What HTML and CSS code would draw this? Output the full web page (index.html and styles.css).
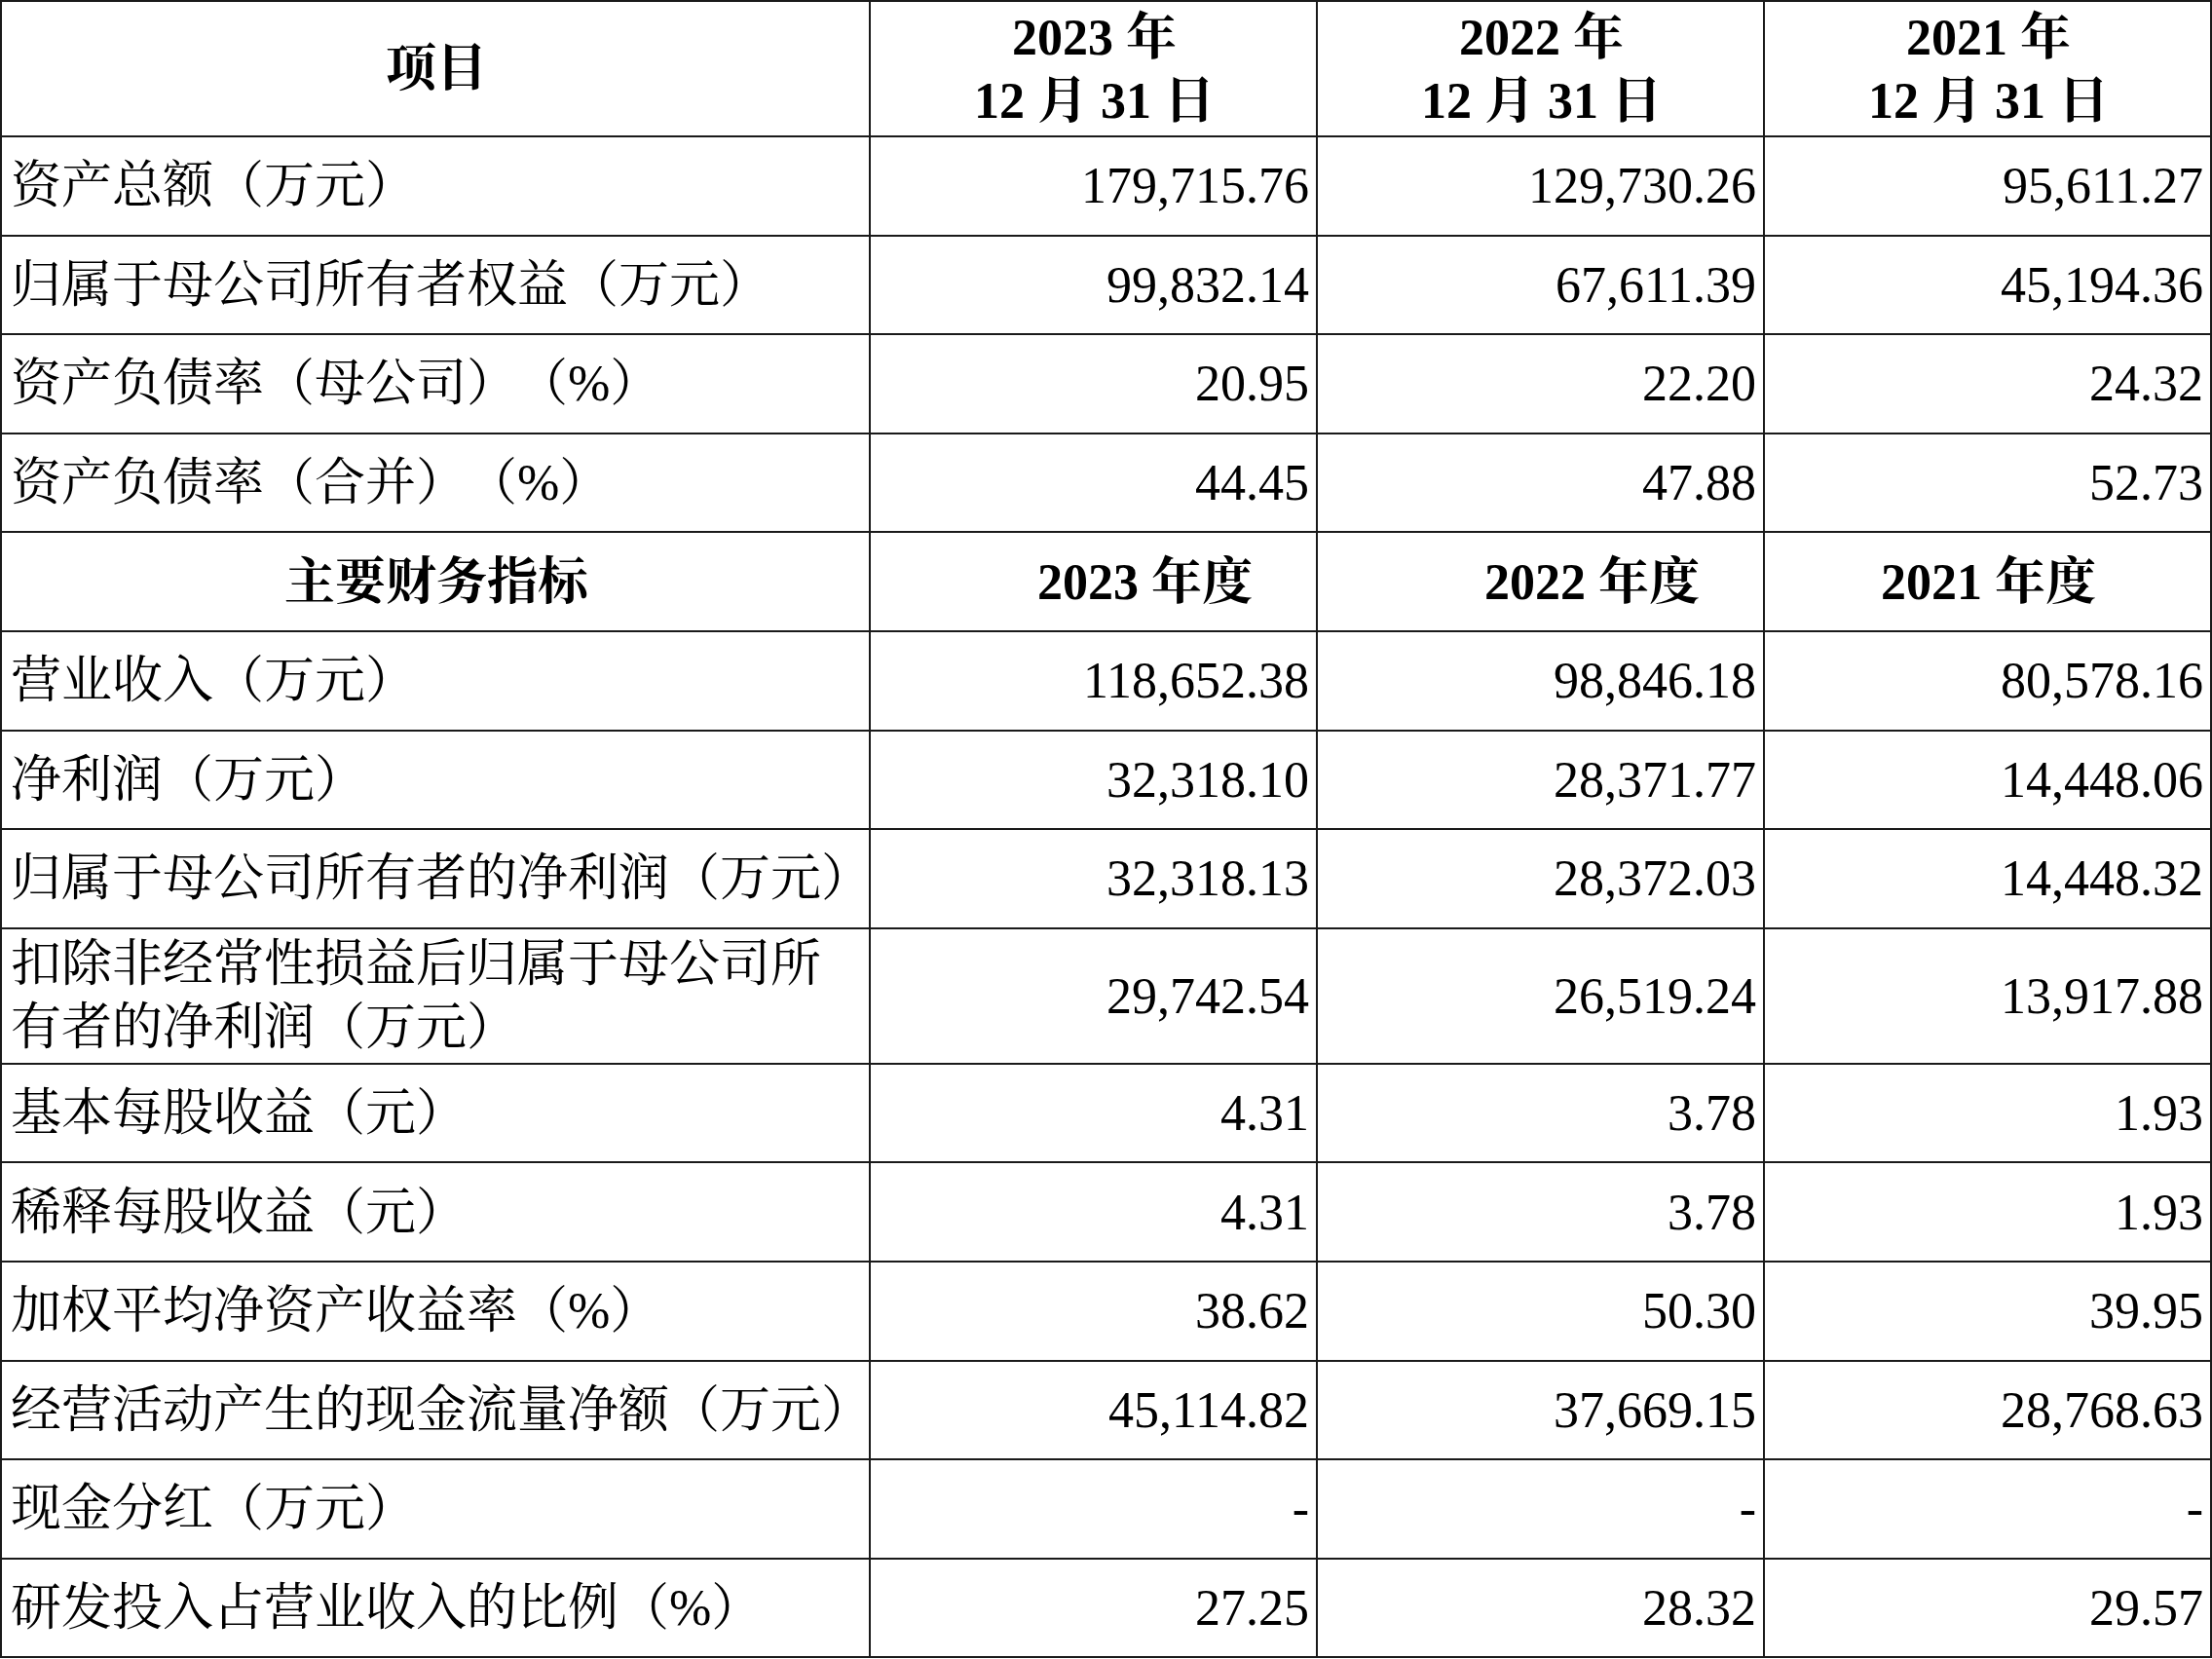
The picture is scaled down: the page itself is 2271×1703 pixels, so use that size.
FILE: index.html
```html
<!DOCTYPE html>
<html lang="zh-CN">
<head>
<meta charset="utf-8">
<title>主要财务指标</title>
<link rel="stylesheet" href="styles.css">
</head>
<body>
<table class="fin">
  <colgroup>
    <col class="c-item">
    <col class="c-val">
    <col class="c-val">
    <col class="c-val">
  </colgroup>
  <tr class="row-tall head">
    <th>项目</th>
    <th>2023 年<br>12 月 31 日</th>
    <th>2022 年<br>12 月 31 日</th>
    <th>2021 年<br>12 月 31 日</th>
  </tr>
  <tr class="row"><td class="label">资产总额（万元）</td><td class="num">179,715.76</td><td class="num">129,730.26</td><td class="num">95,611.27</td></tr>
  <tr class="row"><td class="label">归属于母公司所有者权益（万元）</td><td class="num">99,832.14</td><td class="num">67,611.39</td><td class="num">45,194.36</td></tr>
  <tr class="row"><td class="label">资产负债率（母公司）（%）</td><td class="num">20.95</td><td class="num">22.20</td><td class="num">24.32</td></tr>
  <tr class="row"><td class="label">资产负债率（合并）（%）</td><td class="num">44.45</td><td class="num">47.88</td><td class="num">52.73</td></tr>
  <tr class="row head"><th>主要财务指标</th><th class="shift">2023 年度</th><th class="shift">2022 年度</th><th>2021 年度</th></tr>
  <tr class="row"><td class="label">营业收入（万元）</td><td class="num">118,652.38</td><td class="num">98,846.18</td><td class="num">80,578.16</td></tr>
  <tr class="row"><td class="label">净利润（万元）</td><td class="num">32,318.10</td><td class="num">28,371.77</td><td class="num">14,448.06</td></tr>
  <tr class="row"><td class="label">归属于母公司所有者的净利润（万元）</td><td class="num">32,318.13</td><td class="num">28,372.03</td><td class="num">14,448.32</td></tr>
  <tr class="row-tall"><td class="label">扣除非经常性损益后归属于母公司所<br>有者的净利润（万元）</td><td class="num">29,742.54</td><td class="num">26,519.24</td><td class="num">13,917.88</td></tr>
  <tr class="row"><td class="label">基本每股收益（元）</td><td class="num">4.31</td><td class="num">3.78</td><td class="num">1.93</td></tr>
  <tr class="row"><td class="label">稀释每股收益（元）</td><td class="num">4.31</td><td class="num">3.78</td><td class="num">1.93</td></tr>
  <tr class="row"><td class="label">加权平均净资产收益率（%）</td><td class="num">38.62</td><td class="num">50.30</td><td class="num">39.95</td></tr>
  <tr class="row"><td class="label">经营活动产生的现金流量净额（万元）</td><td class="num">45,114.82</td><td class="num">37,669.15</td><td class="num">28,768.63</td></tr>
  <tr class="row"><td class="label">现金分红（万元）</td><td class="num">-</td><td class="num">-</td><td class="num">-</td></tr>
  <tr class="row"><td class="label">研发投入占营业收入的比例（%）</td><td class="num">27.25</td><td class="num">28.32</td><td class="num">29.57</td></tr>
</table>
</body>
</html>
```

FILE: styles.css
```css
html, body {
  margin: 0;
  padding: 0;
  background: #ffffff;
}

.fin {
  border-collapse: collapse;
  table-layout: fixed;
  width: 2271px;
  font-family: "Liberation Serif", "Noto Serif CJK SC", "Noto Sans CJK SC", serif;
  font-size: 52px;
  line-height: 65px;
  color: #000;
  text-spacing-trim: space-all;
}

.c-item { width: 892px; }
.c-val { width: 459px; }

.fin th,
.fin td {
  border: 2px solid #1a1a1a;
  padding: 0 7px 0 9px;
  vertical-align: middle;
}

.fin th {
  font-weight: bold;
  text-align: center;
}

.fin th.shift {
  padding-left: 113px;
}

.row { height: 101.6px; }
.row-tall { height: 139px; }

.label {
  text-align: left;
  white-space: nowrap;
  overflow: visible;
}

.num {
  text-align: right;
}
```
